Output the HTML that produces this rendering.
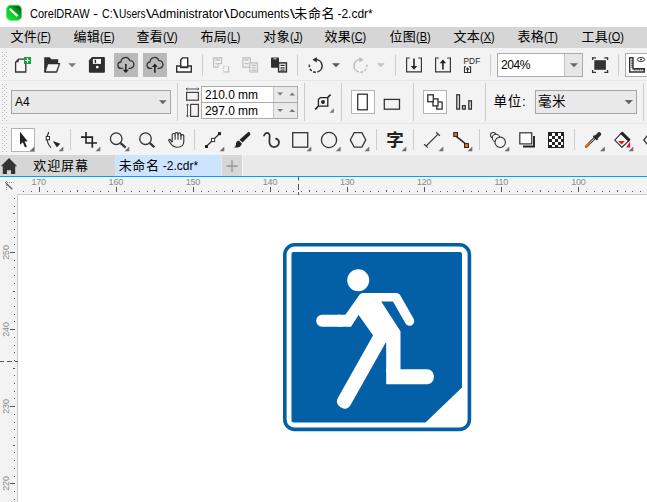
<!DOCTYPE html>
<html><head><meta charset="utf-8">
<style>
*{margin:0;padding:0;box-sizing:border-box}
html,body{width:647px;height:502px;overflow:hidden;background:#fff}
body{font-family:"Liberation Sans","Noto Sans CJK SC",sans-serif;color:#000;position:relative;font-size:12px}
.abs{position:absolute}
.c{font-size:13px;letter-spacing:.5px}
#title{left:0;top:0;width:647px;height:27px;background:#fff}
#title .t{top:5px;line-height:18px;font-size:12px;white-space:pre;transform-origin:0 50%}
#menu{left:0;top:27px;width:647px;height:21.5px;background:#d6d6d6}
#menu span{position:absolute;top:0;line-height:20px;font-size:12px;white-space:nowrap;letter-spacing:-0.15px}
#menu span b{font-weight:normal;font-size:13px;letter-spacing:0.35px}
#menu span i{font-style:normal;display:inline-block;transform:scaleX(.91);transform-origin:0 50%;letter-spacing:0}
#tb1{left:0;top:48px;width:647px;height:32px;background:#f3f3f3}
#ln1{left:0;top:80px;width:647px;height:1px;background:#e6e6e6}
#tb2{left:0;top:81px;width:647px;height:42px;background:#f3f3f3}
#ln2{left:0;top:123px;width:647px;height:1px;background:#e6e6e6}
#tb3{left:0;top:124px;width:647px;height:31px;background:#f3f3f3}
#tabs{left:0;top:155px;width:647px;height:21px;background:#e9e9e9}
#ruler{left:0;top:177px;width:647px;height:18px;background:#f3f3f3}
#bl{left:0;top:175.5px;width:647px;height:1.5px;background:#00a2f5}
#vruler{left:0;top:195px;width:18px;height:307px;background:#f3f3f3}
#canvas{left:17px;top:194px;width:630px;height:308px;background:#fff;border-left:1px solid #c9c9c9;border-top:1px solid #c9c9c9}
.box{position:absolute;border:1px solid #a6a6a6;background:#e9e9e9}
.wbox{position:absolute;border:1px solid #ababab;background:#fff}
.txt{position:absolute;white-space:pre;line-height:14px}
.rl{position:absolute;font-size:9px;color:#8a8a8a;letter-spacing:-0.2px;line-height:9px;width:30px;text-align:center;top:178px;margin-left:-0.6px}
.vl{position:absolute;font-size:9px;color:#8a8a8a;letter-spacing:-0.2px;line-height:9px;width:30px;height:9px;text-align:center;left:-9.5px;transform:rotate(-90deg)}
svg{position:absolute;left:0;top:0}
</style></head><body>
<div id="title" class="abs"><span class="abs t" style="left:30.2px;transform:scaleX(0.918)">CorelDRAW</span><span class="abs t" style="left:93.3px;transform:scaleX(1.25)">-</span><span class="abs t" style="left:102.3px;transform:scaleX(0.88)">C:</span><span class="abs t" style="left:113.4px;transform:scaleX(1.58)">\</span><span class="abs t" style="left:118.9px;transform:scaleX(0.847)">Users</span><span class="abs t" style="left:145.5px;transform:scaleX(1.58)">\</span><span class="abs t" style="left:151.2px;transform:scaleX(1.021)">Administrator</span><span class="abs t" style="left:224.1px;transform:scaleX(1.6)">\</span><span class="abs t" style="left:229.6px;transform:scaleX(0.98)">Documents</span><span class="abs t" style="left:289.6px;transform:scaleX(1.5)">\</span><span class="abs t" style="left:337.4px;transform:scaleX(1.0)">-2.cdr*</span><span class="abs t c" style="left:294.3px;font-size:13px;letter-spacing:.6px">未命名</span></div>
<div id="menu" class="abs">
<span style="left:10.5px"><b>文件</b><i>(<u>F</u>)</i></span>
<span style="left:73.5px"><b>编辑</b><i>(<u>E</u>)</i></span>
<span style="left:136.5px"><b>查看</b><i>(<u>V</u>)</i></span>
<span style="left:200.5px"><b>布局</b><i>(<u>L</u>)</i></span>
<span style="left:263.3px"><b>对象</b><i>(<u>J</u>)</i></span>
<span style="left:324.5px"><b>效果</b><i>(<u>C</u>)</i></span>
<span style="left:389.5px"><b>位图</b><i>(<u>B</u>)</i></span>
<span style="left:453.5px"><b>文本</b><i>(<u>X</u>)</i></span>
<span style="left:517.5px"><b>表格</b><i>(<u>T</u>)</i></span>
<span style="left:581.5px"><b>工具</b><i>(<u>O</u>)</i></span>
</div>
<div id="tb1" class="abs"></div><div id="ln1" class="abs"></div>
<div id="tb2" class="abs"></div><div id="ln2" class="abs"></div>
<div id="tb3" class="abs"></div>
<div id="tabs" class="abs">
 <div class="abs" style="left:0;top:0;width:114.5px;height:21px;background:#d6d6d6"></div>
 <div class="abs" style="left:114.5px;top:0;width:106.7px;height:21px;background:#cde4fe"></div>
 <div class="abs" style="left:222px;top:0;width:20.3px;height:21px;background:#d7d7d7"></div><div class="abs" style="left:242.3px;top:0;width:1px;height:21px;background:#f4f4f4"></div>
 <div class="txt c" style="left:33.3px;top:4px;letter-spacing:.9px">欢迎屏幕</div>
 <div class="txt" style="left:118.7px;top:4px"><span class="c" style="letter-spacing:.6px">未命名</span> -2.cdr*</div>
 <div class="txt" style="left:225.2px;top:-1.5px;font-size:23px;line-height:24px;color:#a2a2a2">+</div>
</div>
<div id="ruler" class="abs"></div><div id="bl" class="abs"></div>
<div id="vruler" class="abs"></div>
<div id="canvas" class="abs"></div>

<!-- toolbar 1 widgets -->
<div class="abs" style="left:114px;top:53px;width:24px;height:24px;background:#b9b9b9"></div>
<div class="abs" style="left:143px;top:53px;width:24px;height:24px;background:#b9b9b9"></div>
<div class="wbox" style="left:497px;top:53px;width:86px;height:24px"><div class="abs" style="right:0;top:0;width:18px;height:22px;background:#e6e6e6;border-left:1px solid #c4c4c4"></div></div>
<div class="txt" style="left:501px;top:58px;letter-spacing:-0.45px">204%</div>
<div class="wbox" style="left:625px;top:53px;width:30px;height:24px"></div>
<div class="txt" style="left:463.4px;top:56.6px;font-size:8.3px;line-height:9px;letter-spacing:.15px;color:#222">PDF</div>

<!-- property bar widgets -->
<div class="box" style="left:11px;top:90px;width:160px;height:24px"></div>
<div class="txt" style="left:15px;top:95px">A4</div>
<div class="wbox" style="left:201px;top:86px;width:97px;height:17px"><div class="abs" style="right:0;top:0;width:24px;height:15px;background:#e9e9e9;border-left:1px solid #c4c4c4"></div></div>
<div class="wbox" style="left:201px;top:102px;width:97px;height:17px"><div class="abs" style="right:0;top:0;width:24px;height:15px;background:#e9e9e9;border-left:1px solid #c4c4c4"></div></div>
<div class="txt" style="left:205px;top:87.5px;letter-spacing:-0.05px">210.0 mm</div>
<div class="txt" style="left:205px;top:103.5px;letter-spacing:-0.05px">297.0 mm</div>
<div class="wbox" style="left:351px;top:90px;width:24px;height:24px;border-color:#b4b4b4"></div>
<div class="wbox" style="left:423px;top:90px;width:24px;height:24px;border-color:#b4b4b4"></div>
<div class="txt c" style="left:493.5px;top:94.5px;font-size:13.5px;letter-spacing:.8px">单位:</div>
<div class="box" style="left:535px;top:90px;width:102px;height:24px"></div>
<div class="txt c" style="left:538px;top:94.5px;font-size:13.5px;letter-spacing:.6px">毫米</div>

<!-- toolbox -->
<div class="wbox" style="left:11px;top:128px;width:24px;height:24px;border-color:#b4b4b4"></div>
<div class="txt" style="left:386.2px;top:131px;font-size:17.5px;line-height:18px;font-weight:bold;color:#222">字</div>

<!-- ruler labels -->
<div class="rl" style="left:24.3px">170</div><div class="rl" style="left:101.4px">160</div><div class="rl" style="left:178.5px">150</div><div class="rl" style="left:255.6px">140</div><div class="rl" style="left:332.7px">130</div><div class="rl" style="left:409.8px">120</div><div class="rl" style="left:486.9px">110</div><div class="rl" style="left:564px">100</div>
<div class="vl" style="top:248px">250</div><div class="vl" style="top:325px">240</div><div class="vl" style="top:402.1px">230</div><div class="vl" style="top:479.2px">220</div>

<svg id="art" width="647" height="502" viewBox="0 0 647 502">
<g id="sign">
<rect x="284.8" y="244.8" width="184.6" height="184.6" rx="9.8" fill="none" stroke="#0460a6" stroke-width="3.6"/>
<path d="M293.5,252 H460 Q462,252 462,254 V387.4 L425.5,422.6 H293.5 Q291.5,422.6 291.5,420.6 V254 Q291.5,252 293.5,252 Z" fill="#0460a6"/>
<g fill="#fff" stroke="none">
<circle cx="358.2" cy="280.3" r="11"/>
<path d="M363,293 L397,293 L400,301.4 L381.2,301.4 L400.5,331.2 L400.5,372 L386.2,372 L386.2,342.8 L373.7,336.3 L358.6,315 L351,326.7 L338,326.7 L338,314.8 L345.4,314.8 L359.3,295 Q360.6,293 363,293 Z"/>
<rect x="316.2" y="314.8" width="30" height="11.9" rx="5.9"/>
<path d="M386.2,369.3 H427.3 A6.5,6.5 0 0 1 433.8,375.8 V377.7 A6.5,6.5 0 0 1 427.3,384.2 H386.2 Z"/>
</g>
<line x1="396.27" y1="297.75" x2="409.5" y2="321" stroke="#fff" stroke-width="9.5" stroke-linecap="round"/>
<polygon points="382.82,331.06 384.38,331.94 344.84,402.22 343.28,401.34" fill="#fff" stroke="#fff" stroke-width="12.8" stroke-linejoin="round"/>
</g>
<g id="rul" fill="#555">
<rect x="23" y="191" width="1" height="1"/>
<rect x="31" y="191" width="1" height="1"/>
<rect x="39" y="187" width="1" height="5"/>
<rect x="47" y="191" width="1" height="1"/>
<rect x="54" y="191" width="1" height="1"/>
<rect x="62" y="191" width="1" height="1"/>
<rect x="70" y="191" width="1" height="1"/>
<rect x="77" y="190" width="1" height="2"/>
<rect x="85" y="191" width="1" height="1"/>
<rect x="93" y="191" width="1" height="1"/>
<rect x="100" y="191" width="1" height="1"/>
<rect x="108" y="191" width="1" height="1"/>
<rect x="116" y="187" width="1" height="5"/>
<rect x="124" y="191" width="1" height="1"/>
<rect x="131" y="191" width="1" height="1"/>
<rect x="139" y="191" width="1" height="1"/>
<rect x="147" y="191" width="1" height="1"/>
<rect x="154" y="190" width="1" height="2"/>
<rect x="162" y="191" width="1" height="1"/>
<rect x="170" y="191" width="1" height="1"/>
<rect x="178" y="191" width="1" height="1"/>
<rect x="185" y="191" width="1" height="1"/>
<rect x="193" y="187" width="1" height="5"/>
<rect x="201" y="191" width="1" height="1"/>
<rect x="208" y="191" width="1" height="1"/>
<rect x="216" y="191" width="1" height="1"/>
<rect x="224" y="191" width="1" height="1"/>
<rect x="232" y="190" width="1" height="2"/>
<rect x="239" y="191" width="1" height="1"/>
<rect x="247" y="191" width="1" height="1"/>
<rect x="255" y="191" width="1" height="1"/>
<rect x="262" y="191" width="1" height="1"/>
<rect x="270" y="187" width="1" height="5"/>
<rect x="278" y="191" width="1" height="1"/>
<rect x="286" y="191" width="1" height="1"/>
<rect x="293" y="191" width="1" height="1"/>
<rect x="301" y="191" width="1" height="1"/>
<rect x="309" y="190" width="1" height="2"/>
<rect x="316" y="191" width="1" height="1"/>
<rect x="324" y="191" width="1" height="1"/>
<rect x="332" y="191" width="1" height="1"/>
<rect x="339" y="191" width="1" height="1"/>
<rect x="347" y="187" width="1" height="5"/>
<rect x="355" y="191" width="1" height="1"/>
<rect x="363" y="191" width="1" height="1"/>
<rect x="370" y="191" width="1" height="1"/>
<rect x="378" y="191" width="1" height="1"/>
<rect x="386" y="190" width="1" height="2"/>
<rect x="393" y="191" width="1" height="1"/>
<rect x="401" y="191" width="1" height="1"/>
<rect x="409" y="191" width="1" height="1"/>
<rect x="417" y="191" width="1" height="1"/>
<rect x="424" y="187" width="1" height="5"/>
<rect x="432" y="191" width="1" height="1"/>
<rect x="440" y="191" width="1" height="1"/>
<rect x="447" y="191" width="1" height="1"/>
<rect x="455" y="191" width="1" height="1"/>
<rect x="463" y="190" width="1" height="2"/>
<rect x="471" y="191" width="1" height="1"/>
<rect x="478" y="191" width="1" height="1"/>
<rect x="486" y="191" width="1" height="1"/>
<rect x="494" y="191" width="1" height="1"/>
<rect x="501" y="187" width="1" height="5"/>
<rect x="509" y="191" width="1" height="1"/>
<rect x="517" y="191" width="1" height="1"/>
<rect x="525" y="191" width="1" height="1"/>
<rect x="532" y="191" width="1" height="1"/>
<rect x="540" y="190" width="1" height="2"/>
<rect x="548" y="191" width="1" height="1"/>
<rect x="555" y="191" width="1" height="1"/>
<rect x="563" y="191" width="1" height="1"/>
<rect x="571" y="191" width="1" height="1"/>
<rect x="578" y="187" width="1" height="5"/>
<rect x="586" y="191" width="1" height="1"/>
<rect x="594" y="191" width="1" height="1"/>
<rect x="602" y="191" width="1" height="1"/>
<rect x="609" y="191" width="1" height="1"/>
<rect x="617" y="190" width="1" height="2"/>
<rect x="625" y="191" width="1" height="1"/>
<rect x="632" y="191" width="1" height="1"/>
<rect x="640" y="191" width="1" height="1"/>
<rect x="14" y="198" width="1" height="1"/>
<rect x="14" y="206" width="1" height="1"/>
<rect x="13" y="213" width="2" height="1"/>
<rect x="14" y="221" width="1" height="1"/>
<rect x="14" y="229" width="1" height="1"/>
<rect x="14" y="237" width="1" height="1"/>
<rect x="14" y="244" width="1" height="1"/>
<rect x="10" y="252" width="5" height="1"/>
<rect x="14" y="260" width="1" height="1"/>
<rect x="14" y="267" width="1" height="1"/>
<rect x="14" y="275" width="1" height="1"/>
<rect x="14" y="283" width="1" height="1"/>
<rect x="13" y="291" width="2" height="1"/>
<rect x="14" y="298" width="1" height="1"/>
<rect x="14" y="306" width="1" height="1"/>
<rect x="14" y="314" width="1" height="1"/>
<rect x="14" y="321" width="1" height="1"/>
<rect x="10" y="329" width="5" height="1"/>
<rect x="14" y="337" width="1" height="1"/>
<rect x="14" y="345" width="1" height="1"/>
<rect x="14" y="352" width="1" height="1"/>
<rect x="14" y="360" width="1" height="1"/>
<rect x="13" y="368" width="2" height="1"/>
<rect x="14" y="375" width="1" height="1"/>
<rect x="14" y="383" width="1" height="1"/>
<rect x="14" y="391" width="1" height="1"/>
<rect x="14" y="398" width="1" height="1"/>
<rect x="10" y="406" width="5" height="1"/>
<rect x="14" y="414" width="1" height="1"/>
<rect x="14" y="422" width="1" height="1"/>
<rect x="14" y="429" width="1" height="1"/>
<rect x="14" y="437" width="1" height="1"/>
<rect x="13" y="445" width="2" height="1"/>
<rect x="14" y="452" width="1" height="1"/>
<rect x="14" y="460" width="1" height="1"/>
<rect x="14" y="468" width="1" height="1"/>
<rect x="14" y="476" width="1" height="1"/>
<rect x="10" y="483" width="5" height="1"/>
<rect x="14" y="491" width="1" height="1"/>
<rect x="14" y="499" width="1" height="1"/>
<rect x="298" y="177" width="1" height="3.5"/><rect x="298" y="184" width="1" height="6"/><rect x="298" y="192" width="1" height="3"/>
<rect x="0" y="361" width="4" height="1"/><rect x="7" y="361" width="5" height="1"/><rect x="15" y="361" width="3" height="1"/>
</g>
<g stroke="#888" stroke-width="1" fill="none"><path d="M5,182.5 H13.5 M6.5,181 V190" stroke-dasharray="1 1"/><path d="M6,183.2 L12.3,189.3" stroke="#555" stroke-width="1.2"/></g>
<g fill="#bdbdbd">
<rect x="2" y="52" width="1" height="1"/><rect x="6" y="52" width="1" height="1"/>
<rect x="4" y="54" width="1" height="1"/>
<rect x="2" y="56" width="1" height="1"/><rect x="6" y="56" width="1" height="1"/>
<rect x="4" y="58" width="1" height="1"/>
<rect x="2" y="60" width="1" height="1"/><rect x="6" y="60" width="1" height="1"/>
<rect x="4" y="62" width="1" height="1"/>
<rect x="2" y="64" width="1" height="1"/><rect x="6" y="64" width="1" height="1"/>
<rect x="4" y="66" width="1" height="1"/>
<rect x="2" y="68" width="1" height="1"/><rect x="6" y="68" width="1" height="1"/>
<rect x="4" y="70" width="1" height="1"/>
<rect x="2" y="72" width="1" height="1"/><rect x="6" y="72" width="1" height="1"/>
<rect x="4" y="74" width="1" height="1"/>
<rect x="2" y="76" width="1" height="1"/><rect x="6" y="76" width="1" height="1"/>
<rect x="2" y="84" width="1" height="1"/><rect x="6" y="84" width="1" height="1"/>
<rect x="4" y="86" width="1" height="1"/>
<rect x="2" y="88" width="1" height="1"/><rect x="6" y="88" width="1" height="1"/>
<rect x="4" y="90" width="1" height="1"/>
<rect x="2" y="92" width="1" height="1"/><rect x="6" y="92" width="1" height="1"/>
<rect x="4" y="94" width="1" height="1"/>
<rect x="2" y="96" width="1" height="1"/><rect x="6" y="96" width="1" height="1"/>
<rect x="4" y="98" width="1" height="1"/>
<rect x="2" y="100" width="1" height="1"/><rect x="6" y="100" width="1" height="1"/>
<rect x="4" y="102" width="1" height="1"/>
<rect x="2" y="104" width="1" height="1"/><rect x="6" y="104" width="1" height="1"/>
<rect x="4" y="106" width="1" height="1"/>
<rect x="2" y="108" width="1" height="1"/><rect x="6" y="108" width="1" height="1"/>
<rect x="4" y="110" width="1" height="1"/>
<rect x="2" y="112" width="1" height="1"/><rect x="6" y="112" width="1" height="1"/>
<rect x="4" y="114" width="1" height="1"/>
<rect x="2" y="116" width="1" height="1"/><rect x="6" y="116" width="1" height="1"/>
<rect x="4" y="118" width="1" height="1"/>
<rect x="2" y="120" width="1" height="1"/><rect x="6" y="120" width="1" height="1"/>
<rect x="2" y="127" width="1" height="1"/><rect x="6" y="127" width="1" height="1"/>
<rect x="4" y="129" width="1" height="1"/>
<rect x="2" y="131" width="1" height="1"/><rect x="6" y="131" width="1" height="1"/>
<rect x="4" y="133" width="1" height="1"/>
<rect x="2" y="135" width="1" height="1"/><rect x="6" y="135" width="1" height="1"/>
<rect x="4" y="137" width="1" height="1"/>
<rect x="2" y="139" width="1" height="1"/><rect x="6" y="139" width="1" height="1"/>
<rect x="4" y="141" width="1" height="1"/>
<rect x="2" y="143" width="1" height="1"/><rect x="6" y="143" width="1" height="1"/>
<rect x="4" y="145" width="1" height="1"/>
<rect x="2" y="147" width="1" height="1"/><rect x="6" y="147" width="1" height="1"/>
<rect x="4" y="149" width="1" height="1"/>
<rect x="2" y="151" width="1" height="1"/><rect x="6" y="151" width="1" height="1"/>
</g>
<!-- separators tb1 -->
<g fill="#cdcdcd">
<rect x="202" y="54.5" width="1" height="21"/><rect x="297" y="54.5" width="1" height="21"/><rect x="395" y="54.5" width="1" height="21"/><rect x="490" y="54.5" width="1" height="21"/><rect x="618" y="54.5" width="1" height="21"/>
<rect x="177" y="83" width="1" height="38"/><rect x="304" y="83" width="1" height="38"/><rect x="341" y="83" width="1" height="38"/><rect x="413" y="83" width="1" height="38"/><rect x="485" y="83" width="1" height="38"/><rect x="643" y="83" width="1" height="38"/>
<rect x="70" y="129" width="1" height="21"/><rect x="194" y="129" width="1" height="21"/><rect x="376" y="129" width="1" height="21"/><rect x="413" y="129" width="1" height="21"/><rect x="479" y="129" width="1" height="21"/><rect x="574" y="129" width="1" height="21"/>
</g>

<!-- new doc -->
<path d="M18.6,59.2 H25.8 V72 H15.6 V62.2 Z" fill="#f7f7f7" stroke="#333" stroke-width="1.3"/>
<path d="M15.6,62.2 H18.6 V59.2 Z" fill="#333"/>
<rect x="24" y="57" width="7" height="7" fill="#12a33a"/>
<path d="M27.5,58.3 V62.7 M25.3,60.5 H29.7" stroke="#fff" stroke-width="1.2"/>
<!-- folder -->
<path d="M44.2,57.2 H49.8 L51.2,59.2 H58.2 V63.5 H47.3 L44.8,72.6 H44.2 Z" fill="#2e2e2e"/>
<path d="M47.6,63.6 H59.6 L56.6,72 H45 Z" fill="#f4f4f4" stroke="#2e2e2e" stroke-width="1.3" stroke-linejoin="round"/>
<path d="M68.3,63.2 H76 L72.15,67.2 Z" fill="#7a7a7a"/>
<!-- floppy -->
<path d="M92,57 H104 Q104.9,57 104.9,57.9 V71.8 Q104.9,72.7 104,72.7 H89.8 Q88.9,72.7 88.9,71.8 V60.4 Z" fill="#2e2e2e"/>
<rect x="92.9" y="58.9" width="8.1" height="5" fill="#fafafa"/><rect x="94.7" y="59.7" width="1.4" height="3.4" fill="#2e2e2e"/>
<circle cx="97.3" cy="67.1" r="1.4" fill="#fafafa"/>
<!-- cloud down -->
<g fill="none" stroke="#333" stroke-width="1.3" stroke-linecap="round" stroke-linejoin="round">
<path d="M122.6,68.4 H121.3 A3.2,3.2 0 0 1 121,62 A4.45,4.45 0 0 1 129.7,60.6 A3.9,3.9 0 0 1 130.3,68.4 H129"/>

<path d="M151.7,68.4 H150.4 A3.2,3.2 0 0 1 150.1,62 A4.45,4.45 0 0 1 158.8,60.6 A3.9,3.9 0 0 1 159.4,68.4 H158.1"/>

</g>
<path d="M125.8,63.9 V70.5" stroke="#222" stroke-width="1.6"/><path d="M122.7,69.7 H128.9 L125.8,73 Z" fill="#222"/>
<path d="M154.85,66 V72.7" stroke="#222" stroke-width="1.6"/><path d="M151.9,67 H157.8 L154.85,63.6 Z" fill="#222"/>
<!-- print -->
<g fill="#fff" stroke="#2e2e2e" stroke-width="1.4">
<path d="M180.7,67 V59.8 L182.6,57.9 H187.7 V67 Z"/>
<path d="M180.7,66 H176.7 V72 H191.3 V66 H187.7 V67.6 H180.7 Z"/>
</g>
<!-- cut copy (disabled) paste -->
<g fill="none" stroke="#bcbcbc" stroke-width="1.2">
<path d="M213.6,57.8 H221.6 V63.6 H218 V67.2 H213.6 Z"/>
<path d="M215.3,60 H219.8 M215.3,63.6 H217" stroke-width="1.3"/>
<path d="M223.5,66.4 H226.5" stroke-dasharray="1.2 1.2"/>
<path d="M223.5,67.5 V71" stroke-dasharray="1.2 1.2"/>
<path d="M228.6,66.2 V72 H223.4"/>
<path d="M242.9,57.8 H250.4 V67.2 H242.9 Z"/>
<path d="M244.6,60 H248.6 M244.6,63.6 H248.6" stroke-width="1.3"/>
<path d="M249.8,62.8 H257.4 V72 H249.8 Z" fill="#f2f2f2"/>
<path d="M251.6,65.3 H255.8 M251.6,67.9 H255.8 M251.6,70.3 H255.8" stroke-width="1.3"/>
</g>
<rect x="271" y="57.6" width="8" height="10.2" rx="0.8" fill="#2e2e2e"/>
<rect x="273.5" y="58.4" width="3" height="0.9" fill="#f2f2f2"/>
<rect x="278.6" y="62.9" width="7.8" height="9" fill="#fafafa" stroke="#2e2e2e" stroke-width="1.5"/>
<path d="M280.4,65.3 H284.7 M280.4,67.8 H284.7 M280.4,70.2 H284.7" stroke="#2e2e2e" stroke-width="1.3"/>
<!-- undo redo -->
<g fill="none" stroke-width="1.5">
<path d="M315.70,59.50 A6.4,6.4 0 0 1 317.36,72.08" stroke="#2e2e2e"/><path d="M317.36,72.08 A6.4,6.4 0 0 1 309.90,63.20" stroke="#2e2e2e" stroke-dasharray="0 1.6 2.6 1.8 2.6 1.8 2.4 9"/>
<path d="M360.40,59.50 A6.4,6.4 0 0 0 358.74,72.08" stroke="#bdbdbd"/><path d="M358.74,72.08 A6.4,6.4 0 0 0 366.20,63.20" stroke="#bdbdbd" stroke-dasharray="0 1.6 2.6 1.8 2.6 1.8 2.4 9"/>
</g>
<path d="M316.8,57 V62.4 L312.4,59.7 Z" fill="#2e2e2e"/>
<path d="M359.3,57 V62.4 L363.7,59.7 Z" fill="#bdbdbd"/>
<path d="M332,63.2 H340 L336,67.2 Z" fill="#555"/>
<path d="M377,63.2 H384.8 L380.9,67.2 Z" fill="#c4c4c4"/>
<!-- import export -->
<g fill="none" stroke="#333" stroke-width="1.15">
<path d="M409.8,58 H406.6 V71.9 H421.4 V58 H418.2"/>
<path d="M438.8,58 H435.6 V71.9 H450.4 V58 H447.2"/>
</g>
<g fill="none" stroke="#222" stroke-width="1.6">
<path d="M414,58.6 V67"/>
<path d="M442.9,69.6 V62.5"/>
</g>
<path d="M410.8,66 H417.2 L414,69.8 Z M439.7,63.3 H446.1 L442.9,59.4 Z" fill="#222"/>
<!-- pdf small icon -->
<rect x="465" y="69.6" width="5.1" height="2.4" fill="#fff"/>
<path d="M466.1,66.8 H464.5 V72.5 H470.6 V66.8 H469" fill="none" stroke="#2e2e2e" stroke-width="1.1"/>
<path d="M465.5,69.7 H469.6 L467.55,67 Z" fill="#2e2e2e"/>
<path d="M467.55,69.5 V72.4" stroke="#2e2e2e" stroke-width="1.2"/>
<!-- zoom dropdown arrow -->
<path d="M570,63.2 H578 L574,67.2 Z" fill="#666"/>
<!-- fullscreen -->
<rect x="594.3" y="60.2" width="11.6" height="9.6" fill="#333"/>
<path d="M592.6,60 V57.8 H596 M604.3,57.8 H607.6 V60 M607.6,70 V72.3 H604.3 M596,72.3 H592.6 V70" fill="none" stroke="#333" stroke-width="1.3"/>
<!-- ruler btn icon -->
<path d="M629.7,57.8 H633 V68.8 H644.3 V72 H629.7 Z" fill="none" stroke="#333" stroke-width="1.4"/>
<path d="M631.2,60.3 H633 M631.2,62 H633 M631.2,63.7 H633 M631.2,65.4 H633 M631.2,67.1 H633 M634.2,68.8 V70.6 M636,68.8 V70.6 M637.8,68.8 V70.6 M639.6,68.8 V70.6 M641.4,68.8 V70.6 M643.2,68.8 V70.6" stroke="#333" stroke-width="0.9"/>
<ellipse cx="641" cy="59.5" rx="3.7" ry="2" fill="none" stroke="#333" stroke-width="1"/><rect x="640" y="58.9" width="2" height="1.2" fill="#333"/>

<!-- property bar -->
<path d="M159,100.2 H166.6 L162.8,104.2 Z" fill="#666"/>
<path d="M624.6,100 H633 L628.8,104.2 Z" fill="#666"/>
<g fill="none" stroke="#444" stroke-width="1.2">
<rect x="186.6" y="92.4" width="11.8" height="7.8"/>
<rect x="190.6" y="104.4" width="7.8" height="12"/>
</g>
<g fill="none" stroke="#444" stroke-width="0.9">
<path d="M186.2,89 H198.8 M187.5,87.7 L186.2,89 L187.5,90.3 M197.5,87.7 L198.8,89 L197.5,90.3"/>
<path d="M187.5,104 V116.8 M186.2,105.3 L187.5,104 L188.8,105.3 M186.2,115.5 L187.5,116.8 L188.8,115.5"/>
</g>
<g fill="#777">
<path d="M277.3,92.6 H283 L280.15,95.6 Z"/><path d="M289.4,95.6 H295.1 L292.25,92.6 Z"/>
<path d="M277.3,108.9 H283 L280.15,111.9 Z"/><path d="M289.4,111.9 H295.1 L292.25,108.9 Z"/>
</g>
<!-- page frame icon -->
<path d="M320.3,97.6 H327.8 V106.2 H318.4 V99.5 Z" fill="none" stroke="#222" stroke-width="1.3"/>
<circle cx="323" cy="102" r="1.9" fill="#222"/>
<path d="M315.2,109.3 L318.2,106.4 M327.9,97.3 L330.6,94.6" stroke="#222" stroke-width="1.6"/>
<path d="M333.9,108.3 V112.7 H329.5 Z" fill="#777"/>
<rect x="357.7" y="94.2" width="9.6" height="15.6" fill="none" stroke="#333" stroke-width="1.3"/>
<rect x="384.3" y="99.4" width="15.2" height="9.8" fill="none" stroke="#333" stroke-width="1.3"/>
<g fill="none" stroke="#2e2e2e" stroke-width="1.3">
<rect x="436.8" y="102" width="5.3" height="7.1" fill="#fff"/>
<rect x="433" y="98.9" width="5" height="7" fill="#fff"/>
<rect x="427.8" y="94.8" width="5.5" height="6.9" fill="#fff"/>
<rect x="456.8" y="94.8" width="2.7" height="14.3"/>
<rect x="462.5" y="105.7" width="2.8" height="3.4"/>
<rect x="468.8" y="100.8" width="2.6" height="8.3"/>
</g>

<!-- toolbox -->
<g fill="#6e6e6e">
<path d="M34.3,146.5 V151.2 H29.6 Z"/><path d="M63.3,146.5 V151.2 H58.6 Z"/><path d="M100.3,146.5 V151.2 H95.6 Z"/><path d="M129.3,146.5 V151.2 H124.6 Z"/>
<path d="M224.3,146.5 V151.2 H219.6 Z"/><path d="M311.3,146.5 V151.2 H306.6 Z"/><path d="M340.6,146.5 V151.2 H335.9 Z"/><path d="M369.3,146.5 V151.2 H364.6 Z"/>
<path d="M406.3,146.5 V151.2 H401.6 Z"/><path d="M443.3,146.5 V151.2 H438.6 Z"/><path d="M472.3,146.5 V151.2 H467.6 Z"/><path d="M509.3,146.5 V151.2 H504.6 Z"/>
<path d="M604.8,146.5 V151.2 H600.1 Z"/><path d="M633.3,146.5 V151.2 H628.6 Z"/>
</g>
<!-- pick -->
<path d="M20,131.8 V144.8 L22.8,142.3 L25,147.5 L26.9,146.6 L24.6,141.6 L27.7,141.3 Z" fill="#222"/>
<!-- shape tool -->
<path d="M48.8,132.1 Q44.2,140 50.9,147.6" fill="none" stroke="#333" stroke-width="1.2"/>
<rect x="46.2" y="136.5" width="3.3" height="3.3" fill="#fff" stroke="#333" stroke-width="1"/>
<path d="M52.9,141 L60.3,143.8 L56.8,147.3 Z" fill="#222"/>
<!-- crop -->
<path d="M81,137.1 H92.3 V147.8 M86,132 V143 H97" fill="none" stroke="#222" stroke-width="1.6"/>
<!-- zoom tools -->
<g fill="none" stroke="#333">
<circle cx="116.2" cy="138.7" r="5.8" stroke-width="1.3"/><path d="M120.6,143.1 L125.6,147.6" stroke-width="2.2"/>
<circle cx="145.5" cy="138.7" r="5.8" stroke-width="1.3"/><path d="M149.9,143.1 L154.4,147.3" stroke-width="2.2"/>
</g>
<!-- hand -->
<path d="M172.2,142.3 V134.9 a1.45,1.45 0 0 1 2.9,0 V134 a1.45,1.45 0 0 1 2.9,0 V134.4 a1.45,1.45 0 0 1 2.9,0 V136 a1.45,1.45 0 0 1 2.9,0 V141.5 C183.8,145.5 181,147.2 177.5,147.2 C174.5,147.2 172.5,146.5 170.8,143.8 L168.8,140.8 Q168.4,139 170,139.4 L172.2,142.3" fill="none" stroke="#333" stroke-width="1.15" stroke-linejoin="round"/>
<path d="M175.1,134.9 V139.8 M178,134 V139.8 M180.9,134.6 V139.8" stroke="#333" stroke-width="1.1"/>
<!-- line tool -->
<path d="M206.5,146.3 L219.5,133.7" stroke="#333" stroke-width="1.2"/>
<rect x="205" y="145" width="3" height="3" fill="#222"/><rect x="218" y="132.1" width="3" height="3" fill="#222"/>
<rect x="211.4" y="138.4" width="3.2" height="3.2" fill="#fff" stroke="#333" stroke-width="1"/>
<!-- brush -->
<path d="M248.5,131.8 Q250.8,132.5 250.3,134.8 L242.5,142.5 L239.5,139.8 Z" fill="#222"/>
<path d="M238.8,140.6 L241.7,143.4 Q241.5,147.8 234,147.6 Q236.5,146 236,143 Q236.8,140.8 238.8,140.6 Z" fill="#222"/>
<!-- freehand hook -->
<path d="M264,135.5 Q265.5,132.3 268,133 Q270.3,134 269.5,138.5 Q268.5,146.5 273.5,147 Q278.5,147 279,142.5 Q279,139.5 276,138.7" fill="none" stroke="#2e2e2e" stroke-width="1.75" stroke-linecap="round"/>
<!-- rect / ellipse / polygon -->
<rect x="292.7" y="132.7" width="15" height="14.5" fill="none" stroke="#333" stroke-width="1.3"/>
<circle cx="329" cy="140" r="7.6" fill="none" stroke="#333" stroke-width="1.3"/>
<path d="M354.2,132.7 H361.9 L365.8,139.9 L361.9,147.1 H354.2 L350.3,139.9 Z" fill="none" stroke="#333" stroke-width="1.25"/>
<!-- dimension -->
<path d="M426.2,146 L437.8,134.3" stroke="#3a3a3a" stroke-width="1.15"/>
<path d="M424.1,144.2 L427.9,147.6 M436.1,132.3 L439.9,135.8" stroke="#3a3a3a" stroke-width="1.2"/>
<!-- connector -->
<path d="M456,136.2 L465,143.3" stroke="#222" stroke-width="1.5"/>
<rect x="453.7" y="132.6" width="3.8" height="3.8" fill="#ff6a00" stroke="#222" stroke-width="1"/>
<rect x="464.5" y="143.6" width="3.9" height="3.9" fill="#ff6a00" stroke="#222" stroke-width="1"/>
<!-- blend -->
<circle cx="493.2" cy="135.1" r="2.7" fill="#f4f4f4" stroke="#333" stroke-width="1.05"/>
<circle cx="496" cy="138" r="3.7" fill="#f4f4f4" stroke="#333" stroke-width="1.05"/>
<circle cx="500.2" cy="142.3" r="5.2" fill="#f4f4f4" stroke="#333" stroke-width="1.1"/>
<!-- shadow -->
<path d="M523,146.5 H534 V136.1" fill="none" stroke="#222" stroke-width="1.9"/>
<rect x="519.8" y="132.8" width="11.9" height="11.1" fill="#fcfcfc" stroke="#333" stroke-width="1.2"/>
<!-- checker -->
<rect x="548" y="132" width="16" height="16" fill="#222"/>
<g fill="#fff"><rect x="552" y="133" width="3" height="3"/><rect x="558" y="133" width="3" height="3"/><rect x="549" y="136" width="3" height="3"/><rect x="555" y="136" width="3" height="3"/><rect x="561" y="136" width="2" height="3"/><rect x="552" y="139" width="3" height="3"/><rect x="558" y="139" width="3" height="3"/><rect x="549" y="142" width="3" height="3"/><rect x="555" y="142" width="3" height="3"/><rect x="561" y="142" width="2" height="3"/><rect x="552" y="145" width="3" height="2"/><rect x="558" y="145" width="3" height="2"/></g>
<!-- eyedropper -->
<path d="M586.2,146.6 L595.3,137.4" stroke="#333" stroke-width="2.7" stroke-linecap="round"/>
<path d="M586.4,146.4 L594.6,138.1" stroke="#f4f4f4" stroke-width="0.9"/>
<path d="M586,146.8 L589.4,143.4" stroke="#f06a10" stroke-width="1.9" stroke-linecap="round"/>
<path d="M593.6,135.8 L597.6,139.8" stroke="#2a2a2a" stroke-width="2.2"/>
<path d="M596.2,137.2 L599.2,134.2" stroke="#2a2a2a" stroke-width="4" stroke-linecap="round"/>
<!-- fill bucket -->
<path d="M621.5,132.9 L629.2,140.4 L621.9,147.3 L614.8,140.2 Z" fill="#f7f7f7" stroke="#333" stroke-width="1.2" stroke-linejoin="round"/>
<path d="M618.1,141 H624.8 L621.5,144.6 Z" fill="#f0101a"/>
<path d="M621.3,132.6 L629.5,140.7" stroke="#222" stroke-width="3.1"/>
<path d="M626.3,147.6 H630.2 V141.2 Z" fill="#f0101a"/>
<!-- outline tool partial -->
<path d="M647.5,135.3 L643.8,140 L647.5,144.7" fill="none" stroke="#333" stroke-width="1.3"/>
<!-- home -->
<path d="M9,157.9 L17.2,166.2 H15.2 V173.9 H11 V170.3 H7 V173.9 H2.8 V166.2 H0.8 Z" fill="#333"/>
<!-- app icon -->
<defs><linearGradient id="ag" x1="0" y1="1" x2="1" y2="0"><stop offset="0" stop-color="#1eea3a"/><stop offset="0.45" stop-color="#0ac82c"/><stop offset="0.75" stop-color="#057a18"/><stop offset="1" stop-color="#03500c"/></linearGradient></defs>
<rect x="6.6" y="5.3" width="14.9" height="15" rx="4.3" fill="url(#ag)" stroke="#2fe650" stroke-width="0.8"/>
<path d="M9.7,8.9 L17.6,16.2" stroke="#f1f6ef" stroke-width="2.3"/>

</svg>
</body></html>
